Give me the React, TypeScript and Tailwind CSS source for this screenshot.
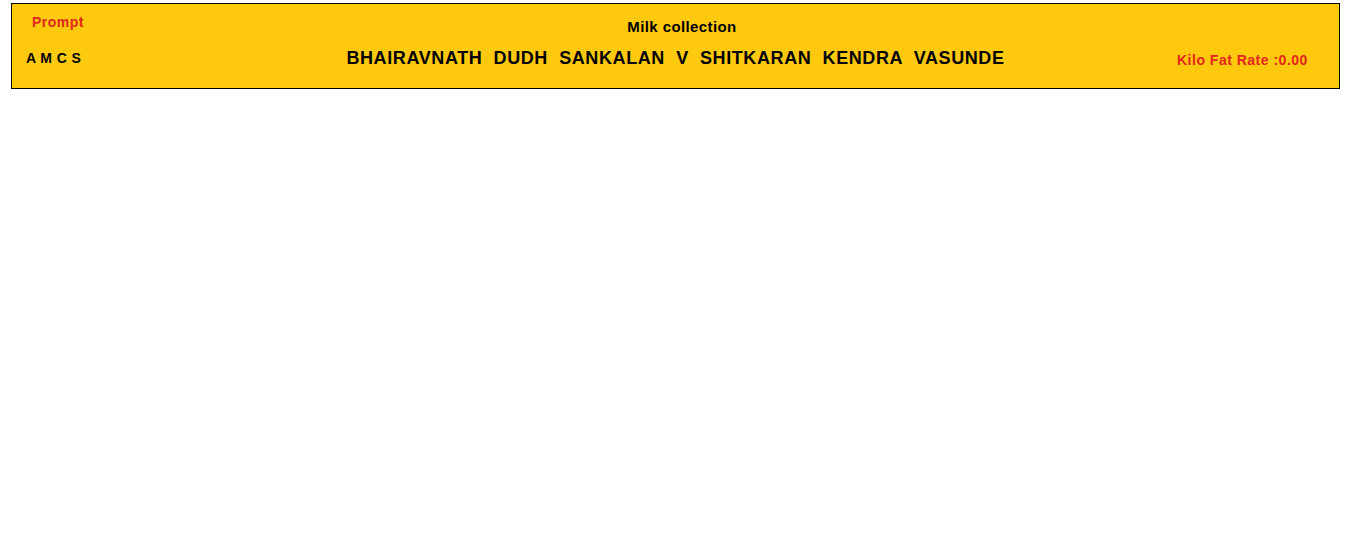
export default function App() {
  return (
    <div className="min-h-[550px] bg-white pt-[3px] font-['Liberation_Sans',Arial,sans-serif]">
      <div className="ml-[11px] h-[86px] w-[1329px] border border-black bg-[#ffc90e]">
        <div className="flex h-[40px] items-start">
          <div className="w-[300px]">
            <div className="ml-[20px] mt-[10px] text-[14px] font-bold leading-4 tracking-[0.5px] text-[#e3261c]">Prompt</div>
          </div>
          <div className="mt-[14px] flex-1 pl-[13px] text-center text-[15px] font-bold leading-[17px] tracking-[0.4px] text-black">
            Milk collection
          </div>
          <div className="w-[300px]" />
        </div>
        <div className="flex items-start">
          <div className="w-[300px]">
            <div className="ml-[14px] mt-[6px] whitespace-pre text-[14px] font-bold leading-4 tracking-[0.4px] text-black">A M C S</div>
          </div>
          <div className="mt-[4px] flex-1 whitespace-pre text-center text-[18px] font-bold leading-5 tracking-[0.6px] text-black">
            {'BHAIRAVNATH  DUDH  SANKALAN  V  SHITKARAN  KENDRA  VASUNDE'}
          </div>
          <div className="w-[300px]">
            <div className="ml-[138px] mt-[8px] text-[14px] font-bold leading-4 tracking-[0.5px] text-[#e3261c]">Kilo Fat Rate :0.00</div>
          </div>
        </div>
      </div>
    </div>
  )
}
